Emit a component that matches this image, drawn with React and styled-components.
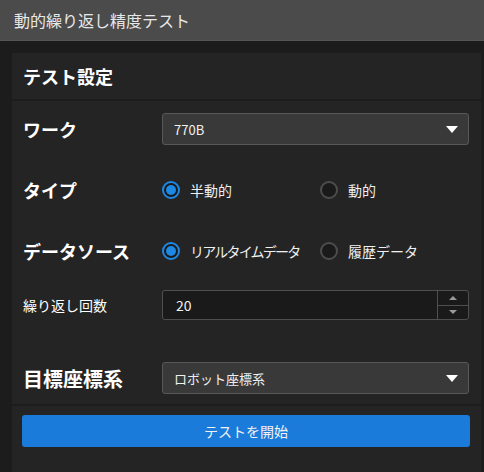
import React from 'react';
import styled, { createGlobalStyle } from 'styled-components';

const Global = createGlobalStyle`
  html, body {
    margin: 0;
    padding: 0;
    background: #1c1c1c;
    font-family: "Noto Sans CJK JP", "Noto Sans", sans-serif;
    color: #e6e6e6;
  }
`;

const Page = styled.div`
  width: 484px;
  height: 472px;
  display: flex;
  flex-direction: column;
  overflow: hidden;
`;

const TitleBar = styled.div`
  height: 41px;
  flex: none;
  background: #4b4b4b;
  border-bottom: 1px solid #555;
  display: flex;
  align-items: center;
  padding-left: 14px;
  font-size: 16px;
  color: #e8e8e8;
  box-sizing: border-box;
`;

const Outer = styled.div`
  flex: 1;
  padding: 12px 3px 0 12px;
  display: flex;
`;

const Panel = styled.div`
  flex: 1;
  background: #242424;
  display: flex;
  flex-direction: column;
`;

const PanelHeader = styled.div`
  height: 46px;
  display: flex;
  align-items: center;
  padding-left: 11px;
  font-size: 18px;
  font-weight: 700;
  color: #fff;
  border-bottom: 2px solid #1c1c1c;
`;

const Body = styled.div`
  padding: 12px 11px 10px 11px;
  border-bottom: 2px solid #1c1c1c;
`;

const Row = styled.div`
  display: grid;
  grid-template-columns: 139px 1fr;
  align-items: center;
  height: ${(p) => p.$h}px;
  margin-top: ${(p) => p.$gap || 0}px;
  padding-right: 1px;
`;

const Label = styled.div`
  font-size: ${(p) => p.$size || 18}px;
  font-weight: ${(p) => (p.$light ? 400 : 700)};
  color: #fff;
  white-space: nowrap;
`;

const Select = styled.div`
  height: 32px;
  box-sizing: border-box;
  background: #393939;
  border: 1px solid #585858;
  border-radius: 3px;
  display: flex;
  align-items: center;
  justify-content: space-between;
  padding: 0 10px 0 11px;
  font-size: 13px;
  color: #f0f0f0;
`;

const Caret = styled.span`
  width: 0;
  height: 0;
  border-left: 6px solid transparent;
  border-right: 6px solid transparent;
  border-top: 7px solid #fff;
`;

const RadioGroup = styled.div`
  display: grid;
  grid-template-columns: 158px auto;
  align-items: center;
`;

const Option = styled.label`
  display: flex;
  align-items: center;
  gap: 10px;
  font-size: 14px;
  letter-spacing: ${(p) => (p.$tight ? '-1.8px' : '0')};
  color: #f0f0f0;
  white-space: nowrap;
`;

const Dot = styled.span`
  width: 18px;
  height: 18px;
  flex: none;
  box-sizing: border-box;
  border-radius: 50%;
  border: 2px solid ${(p) => (p.$on ? '#1e88e5' : '#4d4d4d')};
  background: #1a1a1a;
  display: flex;
  align-items: center;
  justify-content: center;
  &::after {
    content: '';
    width: 10px;
    height: 10px;
    border-radius: 50%;
    background: ${(p) => (p.$on ? '#1e88e5' : 'transparent')};
  }
`;

const NumberBox = styled.div`
  height: 30px;
  box-sizing: border-box;
  background: #1a1a1a;
  border: 1px solid #4f4f4f;
  border-radius: 3px;
  display: flex;
`;

const NumberValue = styled.div`
  flex: 1;
  display: flex;
  align-items: center;
  padding-left: 13px;
  font-size: 14px;
  color: #f0f0f0;
`;

const Spinner = styled.div`
  width: 30px;
  border-left: 1px solid #4f4f4f;
  display: flex;
  flex-direction: column;
`;

const SpinBtn = styled.div`
  flex: 1;
  display: flex;
  align-items: center;
  justify-content: center;
  & + & {
    border-top: 1px solid #4f4f4f;
  }
  &::after {
    content: '';
    border-left: 4px solid transparent;
    border-right: 4px solid transparent;
    ${(p) => (p.$up ? 'border-bottom' : 'border-top')}: 4px solid #9a9a9a;
  }
`;

const Footer = styled.div`
  padding: 9px 11px 0 10px;
`;

const StartButton = styled.button`
  width: 100%;
  height: 32px;
  border: none;
  border-radius: 3px;
  background: #1b7bdb;
  color: #f2f2f2;
  font-family: inherit;
  font-size: 14px;
  cursor: pointer;
`;

const Radio = ({ on, tight, children }) => (
  <Option $tight={tight}>
    <Dot $on={on} />
    {children}
  </Option>
);

export default function App() {
  return (
    <Page>
      <Global />
      <TitleBar>動的繰り返し精度テスト</TitleBar>
      <Outer>
        <Panel>
          <PanelHeader>テスト設定</PanelHeader>
          <Body>
            <Row $h={32}>
              <Label>ワーク</Label>
              <Select>
                770B
                <Caret />
              </Select>
            </Row>
            <Row $h={32} $gap={29}>
              <Label>タイプ</Label>
              <RadioGroup>
                <Radio on>半動的</Radio>
                <Radio>動的</Radio>
              </RadioGroup>
            </Row>
            <Row $h={32} $gap={29}>
              <Label>データソース</Label>
              <RadioGroup>
                <Radio on tight>リアルタイムデータ</Radio>
                <Radio>履歴データ</Radio>
              </RadioGroup>
            </Row>
            <Row $h={30} $gap={23}>
              <Label $light $size={14}>繰り返し回数</Label>
              <NumberBox>
                <NumberValue>20</NumberValue>
                <Spinner>
                  <SpinBtn $up />
                  <SpinBtn />
                </Spinner>
              </NumberBox>
            </Row>
            <Row $h={32} $gap={42}>
              <Label $size={20}>目標座標系</Label>
              <Select>
                ロボット座標系
                <Caret />
              </Select>
            </Row>
          </Body>
          <Footer>
            <StartButton>テストを開始</StartButton>
          </Footer>
        </Panel>
      </Outer>
    </Page>
  );
}
